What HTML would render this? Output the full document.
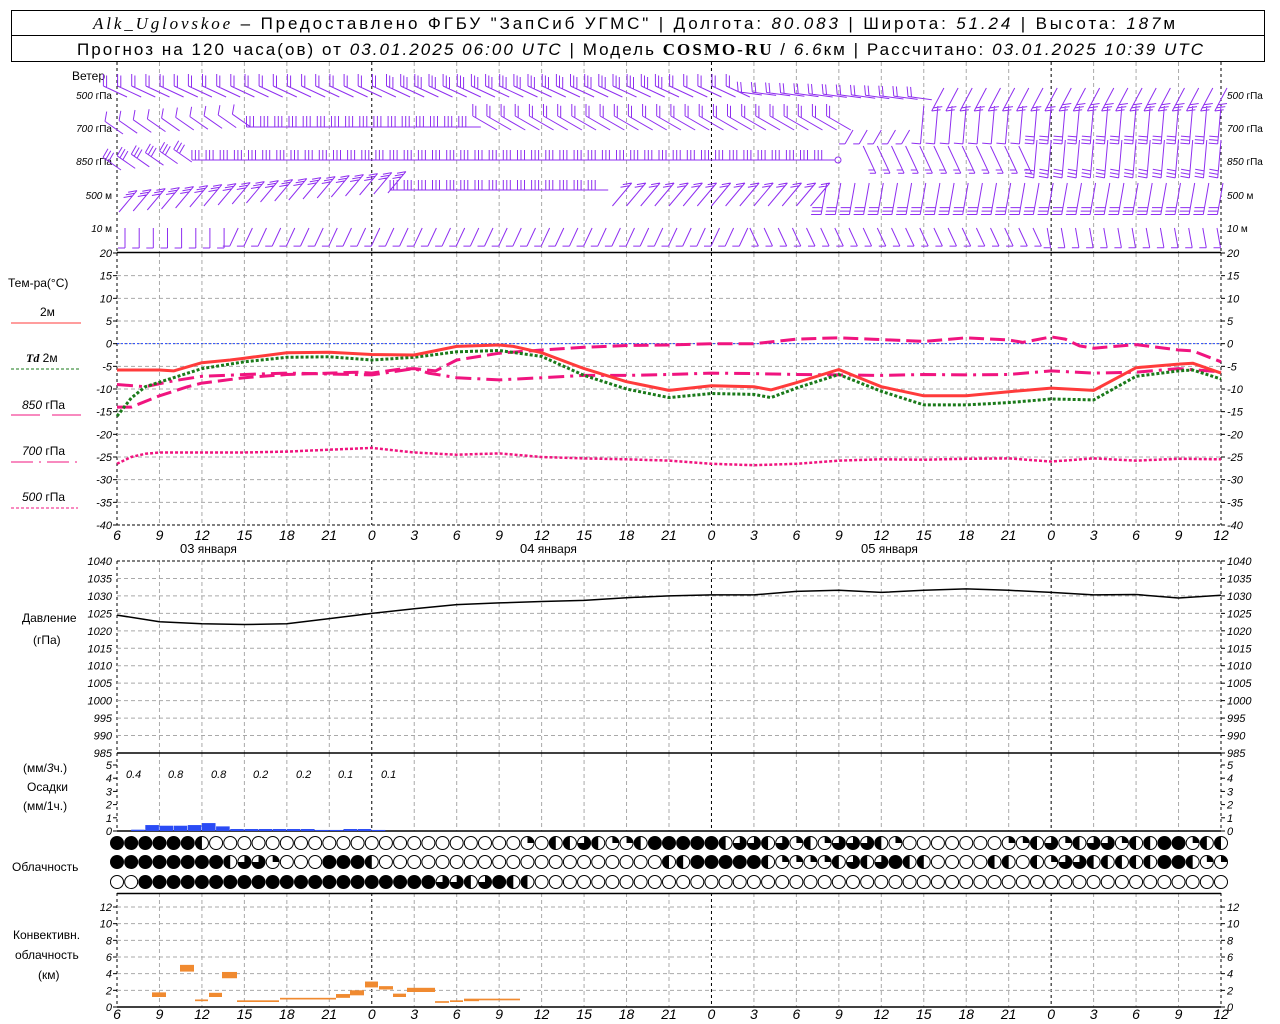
<!DOCTYPE html>
<html><head><meta charset="utf-8"><style>
html,body{margin:0;padding:0;background:#fff;width:1280px;height:1024px;overflow:hidden}
svg{display:block}
text{font-family:"Liberation Sans",sans-serif}
.n{font-style:italic;font-size:11px}
.h{font-style:italic;font-size:14px}
.l{font-size:12px}
</style></head><body>
<svg id="s" width="1280" height="1024" xmlns="http://www.w3.org/2000/svg">
<rect x="11.5" y="10.5" width="1253" height="51" fill="none" stroke="#000"/>
<line x1="11" y1="35.5" x2="1265" y2="35.5" stroke="#000"/>
<text x="93" y="29" font-size="17" textLength="1082" lengthAdjust="spacing"><tspan font-family="Liberation Serif" font-style="italic">Alk_Uglovskoe</tspan> – Предоставлено ФГБУ "ЗапСиб УГМС" | Долгота: <tspan font-style="italic">80.083</tspan> | Широта: <tspan font-style="italic">51.24</tspan> | Высота: <tspan font-style="italic">187</tspan>м</text>
<text x="77" y="55" font-size="17" textLength="1126" lengthAdjust="spacing">Прогноз на 120 часа(ов) от <tspan font-style="italic">03.01.2025 06:00 UTC</tspan> | Модель <tspan font-family="Liberation Serif" font-weight="bold">COSMO-RU</tspan> / <tspan font-style="italic">6.6</tspan>км | Рассчитано: <tspan font-style="italic">03.01.2025 10:39 UTC</tspan></text>
<text x="72" y="80" class="l">Ветер</text>
<text x="8" y="287" class="l" font-size="13">Тем-ра(°C)</text>
<text x="40" y="316" class="l" font-size="11">2м</text>
<line x1="11" y1="323" x2="81" y2="323" stroke="#ff3b3b"/>
<text x="26" y="362" class="l" font-size="11"><tspan font-style="italic" font-weight="bold" font-family="Liberation Serif">Td</tspan>  2м</text>
<line x1="11" y1="369" x2="79" y2="369" stroke="#1a7a1a" stroke-dasharray="3,2"/>
<text x="22" y="409" class="l" font-size="11"><tspan font-style="italic">850</tspan> гПа</text>
<line x1="11" y1="415" x2="40" y2="415" stroke="#f0147f"/><line x1="52" y1="415" x2="81" y2="415" stroke="#f0147f"/>
<text x="22" y="455" class="l" font-size="11"><tspan font-style="italic">700</tspan> гПа</text>
<line x1="11" y1="462" x2="78" y2="462" stroke="#f0147f" stroke-dasharray="22,6,2,6"/>
<text x="22" y="501" class="l" font-size="11"><tspan font-style="italic">500</tspan> гПа</text>
<line x1="11" y1="508" x2="78" y2="508" stroke="#f0147f" stroke-dasharray="3,2"/>
<text x="22" y="622" class="l">Давление</text>
<text x="33" y="644" class="l">(гПа)</text>
<text x="23" y="772" class="l">(мм/<tspan font-style="italic">3</tspan>ч.)</text>
<text x="27" y="791" class="l">Осадки</text>
<text x="23" y="810" class="l">(мм/1ч.)</text>
<text x="12" y="871" class="l">Облачность</text>
<text x="13" y="939" class="l">Конвективн.</text>
<text x="15" y="959" class="l">облачность</text>
<text x="38" y="979" class="l">(км)</text>
<text x="180" y="553" class="l"><tspan font-size="13">03</tspan>  января</text>
<text x="520" y="553" class="l"><tspan font-size="13">04</tspan>  января</text>
<text x="861" y="553" class="l"><tspan font-size="13">05</tspan>  января</text>
<g class="n" font-style="italic" font-size="13">
<text x="126" y="778">0.4</text><text x="168" y="778">0.8</text><text x="211" y="778">0.8</text><text x="253" y="778">0.2</text><text x="296" y="778">0.2</text><text x="338" y="778">0.1</text><text x="381" y="778">0.1</text>
</g>
<g id="g"></g>
</svg>
<script>
var X=function(h){return 117+h*14.1538};
var TY=function(t){return 253+(20-t)*4.5333};
var PY=function(p){return 561+(1040-p)*3.4909};
var RY=function(r){return 831-r*13.2};
var CY=function(k){return 1007-k*8.333};
var o='';
function ln(x1,y1,x2,y2,c,w,d){o+='<line x1="'+x1+'" y1="'+y1+'" x2="'+x2+'" y2="'+y2+'" stroke="'+c+'" stroke-width="'+(w||1)+'"'+(d?' stroke-dasharray="'+d+'"':'')+'/>';}
function tx(x,y,s,a,cl){o+='<text x="'+x+'" y="'+y+'" class="'+(cl||'n')+'"'+(a?' text-anchor="'+a+'"':'')+'>'+s+'</text>';}
var G='#a9a9a9',GD='4,3';
// vertical grids
var panels=[[62,252],[253,525],[561,753],[753,831],[893,1007]];
for(var h=3;h<78;h+=3){var day=(h==18||h==42||h==66);
 panels.forEach(function(p){ln(X(h),p[0],X(h),p[1],day?'#000':G,1,day?'3,3':GD);});}
panels.forEach(function(p){ln(117,p[0],117,p[1],'#000',1,'3,3');ln(1221,p[0],1221,p[1],'#000',1,'3,3');});
// temp grid
for(var t=20;t>=-40;t-=5){var y=TY(t);if(t<20&&t>-40)ln(117,y,1221,y,G,1,GD);
 ln(113,y,117,y,'#000');ln(1221,y,1225,y,'#000');tx(112,y+4,t,'end');tx(1227,y+4,t);}
ln(117,252.5,1221,252.5,'#000',1.5);ln(117,525,1221,525,'#000',1,'3,2');
ln(117,TY(0),1221,TY(0),'#2244ff',1,'2,2');
// pressure grid
for(var p=1040;p>=985;p-=5){var y=PY(p);if(p<1040&&p>985)ln(117,y,1221,y,G,1,GD);
 ln(1221,y,1225,y,'#000');tx(112,y+4,p,'end');tx(1227,y+4,p);}
ln(117,561,1221,561,'#000',1,'3,2');ln(117,753,1221,753,'#000',1.5);
for(var r=0;r<=5;r++){var y=RY(r);ln(113,y,117,y,'#000');ln(1221,y,1225,y,'#000');if(r>0){tx(112,y+4,r,'end');tx(1227,y+4,r);}}
tx(112,835,0,'end');tx(1227,835,0);
ln(117,831,1221,831,'#000',1.5);
// conv grid
for(var k=0;k<=12;k+=2){var y=CY(k);if(k>0)ln(117,y,1221,y,G,1,GD);ln(113,y,117,y,'#000');ln(1221,y,1225,y,'#000');tx(112,y+4,k,'end');tx(1227,y+4,k);}
ln(117,893.5,1221,893.5,'#000',1.5);ln(117,1007,1221,1007,'#000',1.5);
// x labels
for(var h=0;h<=78;h+=3){var v=(6+h)%24;tx(X(h),540,v,'middle','h');tx(X(h),1019,v,'middle','h');}
// wind labels
[['500','гПа',99],['700','гПа',132],['850','гПа',165],['500','м',199],['10','м',232]].forEach(function(a){
 o+='<text x="112" y="'+a[2]+'" text-anchor="end" font-size="10"><tspan font-style="italic">'+a[0]+'</tspan> '+a[1]+'</text>';
 o+='<text x="1227" y="'+a[2]+'" font-size="10"><tspan font-style="italic">'+a[0]+'</tspan> '+a[1]+'</text>';});
// lines
function pl(pts,f,c,w,d){var s=pts.map(function(q){return X(q[0]).toFixed(1)+','+f(q[1]).toFixed(1)}).join(' ');
 o+='<polyline points="'+s+'" fill="none" stroke="'+c+'" stroke-width="'+w+'"'+(d?' stroke-dasharray="'+d+'"':'')+' stroke-linejoin="round"/>';}
var red=[[0,-5.8],[3,-5.8],[4,-6],[6,-4.2],[8,-3.6],[9,-3.2],[12,-2],[15,-1.9],[18,-2.4],[21,-2.5],[24,-0.6],[27,-0.3],[28,-0.6],[30,-2],[33,-5.5],[36,-8.4],[39,-10.3],[42,-9.3],[45,-9.5],[46.2,-10.2],[48,-8.6],[51,-5.7],[54,-9.5],[57,-11.5],[60,-11.5],[63,-10.6],[66,-9.8],[69,-10.3],[72,-5.3],[75,-4.5],[76,-4.3],[78,-6.5]];
var grn=[[0,-16],[1,-12],[2,-9.5],[3,-8.5],[6,-5.5],[9,-4],[12,-3],[15,-2.9],[18,-3.6],[21,-3],[24,-1.8],[27,-1.5],[30,-2.8],[33,-7],[36,-10],[39,-11.9],[42,-11],[45,-11.2],[46.2,-11.9],[48,-9.8],[51,-6.8],[54,-10.5],[57,-13.5],[60,-13.5],[63,-13],[66,-12.2],[69,-12.4],[72,-7.2],[75,-6],[76,-5.8],[78,-7.8]];
var p850=[[0,-14],[1,-14],[3,-11.5],[5,-9.5],[6,-8.7],[9,-7.5],[12,-6.8],[15,-6.5],[17,-6.3],[18,-6.5],[20,-5.6],[21,-5.5],[22.5,-6],[24,-3.6],[26,-2.6],[27,-2.1],[30,-1.4],[33,-0.8],[36,-0.4],[39,-0.3],[42,0],[45,0],[48,1],[51,1.3],[54,0.9],[57,0.5],[60,1.3],[63,0.8],[64,0.3],[66,1.5],[67,1],[68,-0.5],[69,-1],[72,-0.2],[75,-1.4],[76,-1.6],[78,-4]];
var p700=[[0,-9],[2,-9.5],[4,-8.2],[6,-7.2],[9,-6.8],[12,-6.5],[15,-6.7],[18,-6.9],[21,-5.5],[22,-6.5],[24,-7.5],[27,-8],[30,-7.5],[33,-7],[36,-7],[39,-6.8],[42,-6.5],[45,-6.6],[48,-6.8],[51,-6.9],[54,-7],[57,-6.8],[60,-6.9],[63,-6.8],[66,-6],[69,-6.5],[72,-6.3],[75,-5.5],[78,-6.2]];
var p500=[[0,-26.5],[1,-25],[2,-24.3],[3,-24],[6,-24],[9,-24],[12,-23.8],[15,-23.4],[18,-23],[21,-24],[24,-24.5],[27,-24.2],[30,-25],[33,-25.3],[36,-25.5],[39,-25.8],[42,-26.5],[45,-26.8],[48,-26.5],[51,-25.8],[54,-25.5],[57,-25.6],[60,-25.4],[63,-25.3],[66,-26],[69,-25.3],[72,-25.8],[75,-25.4],[78,-25.5]];
pl(p500,TY,'#f0147f',2.5,'3,2');
pl(p700,TY,'#f0147f',3,'16,6,3,6');
pl(p850,TY,'#f0147f',3,'15,6');
pl(grn,TY,'#1a7a1a',3,'3,2');
pl(red,TY,'#ff3b3b',3);
var prs=[[0,1024.5],[3,1022.6],[6,1022],[9,1021.8],[12,1022],[15,1023.5],[18,1025],[21,1026.3],[24,1027.5],[27,1028],[30,1028.4],[33,1028.7],[36,1029.5],[39,1030],[42,1030.3],[45,1030.3],[48,1031.3],[51,1031.6],[54,1031],[57,1031.6],[60,1032],[63,1031.6],[66,1031],[69,1030.3],[72,1030.4],[75,1029.4],[78,1030.2]];
pl(prs,PY,'#000',1.5);
// precip bars
var pb=[0.1,0.45,0.4,0.4,0.45,0.6,0.35,0.15,0.15,0.15,0.15,0.15,0.15,0.08,0.08,0.15,0.15,0.08];
pb.forEach(function(v,i){var x1=X(i+1),y=RY(v);o+='<rect x="'+x1+'" y="'+y+'" width="13.6" height="'+(831-y)+'" fill="#2a4bf5"/>';});
// conv bars
[[152,166,1.2,1.1],[180,194,4.25,1.6],[195,208,0.7,0.4],[209,222,1.2,1.0],[222,237,3.45,1.5],[237,279,0.6,0.4],[280,336,0.9,0.4],[336,350,1.1,0.9],[350,364,1.4,1.2],[365,378,2.35,1.4],[379,393,2.1,0.8],[393,406,1.2,0.8],[407,435,1.8,1.0],[435,449,0.5,0.4],[450,463,0.6,0.4],[464,479,0.7,0.6],[479,520,0.8,0.4]].forEach(function(b){
 var y=CY(b[2]);o+='<rect x="'+b[0]+'" y="'+(y-b[3]*4.2)+'" width="'+(b[1]-b[0])+'" height="'+(b[3]*4.2)+'" fill="#f08a30"/>';});
// clouds
function rep(c,n){return c.repeat(n);}
var rows=[
 '444444'+'2'+rep('0',22)+'102232112'+'44444'+'2332312133321'+rep('0',7)+'1123123312244122',
 '44444444'+'2331'+'000'+'444'+'2'+rep('0',20)+'22'+'44444'+'21111232'+'342200002202133222224421'+'1',
 '00'+rep('4',21)+'3323422'+rep('0',49)];
var cy=[843,862,882];
rows.forEach(function(s,ri){for(var k=0;k<79;k++){var c=+s.charAt(k)||0,x=X(k),y=cy[ri],R=6.5;
 if(c==4){o+='<circle cx="'+x+'" cy="'+y+'" r="'+(R+0.5)+'" fill="#000"/>';continue;}
 o+='<circle cx="'+x+'" cy="'+y+'" r="'+R+'" fill="#fff" stroke="#000" stroke-width="1"/>';
 if(c==1)o+='<path d="M'+x+','+y+' L'+x+','+(y-R)+' A'+R+','+R+' 0 0 1 '+(x+R)+','+y+' Z" fill="#000"/>';
 if(c==2)o+='<path d="M'+x+','+(y-R)+' A'+R+','+R+' 0 0 0 '+x+','+(y+R)+' Z" fill="#000"/>';
 if(c==3)o+='<path d="M'+x+','+y+' L'+x+','+(y-R)+' A'+R+','+R+' 0 1 1 '+(x-R)+','+y+' Z" fill="#000"/>';
}});
// wind barbs
var W='#8f2ff0';var wb='';
function barb(x,y,a,L,n,fa,fl){var r=Math.PI/180,c=Math.cos(a*r),s=Math.sin(a*r),ex=x+L*c,ey=y+L*s;
 wb+='M'+x.toFixed(1)+' '+y.toFixed(1)+'L'+ex.toFixed(1)+' '+ey.toFixed(1);
 var fc=Math.cos(fa*r),fs=Math.sin(fa*r);
 for(var i=0;i<n;i++){var px=ex-c*i*3.5,py=ey-s*i*3.5;wb+='M'+px.toFixed(1)+' '+py.toFixed(1)+'l'+(fl*fc).toFixed(1)+' '+(fl*fs).toFixed(1);}}
for(var h=0;h<=78;h++){var x=X(h);
 // 500 hPa
 if(h<45)barb(x+10,97,-155,26,h>=20&&h<40?3:2,-90,12);
 else if(h<58)barb(x+8,95+(h-45)*0.4,-172,24,2,-95,10);
 else barb(x+6,88,118,26,h>66?3:2,-8,9);
 // 700
 if(h<10)barb(x+6,134-h*0.8,-145,22,1,-80,10);
 else if(h<26)barb(x+10,127,180,22,3,-90,11);
 else if(h<52)barb(x+12,130,-150,28,2,-90,12);
 else if(h<57)barb(x,130,120,16,1,180,6);
 else barb(x,106,95,38,h>64?3:1,185,9);
 // 850
 if(h<6)barb(x+4,170-h*1.6,-145,22,3,-60,10);
 else if(h<51)barb(x+10,160,180,20,3,-90,10);
 else if(h<53){}
 else if(h<65)barb(x-4,146,65,30,2,180,6);
 else barb(x,140,95,38,3,190,9);
 // 500 m
 if(h<20)barb(x+2,212-h*1.0,-50,28,3,170,9);
 else if(h<35)barb(x+10,190,180,20,3,-90,10);
 else if(h<50)barb(x,206,-50,30,2,170,9);
 else barb(x+2,183,100,32,3,180,10);
 // 10 m
 var a=h<8?90:(h<45?115:(h<66?65:80));
 barb(x+(h<45?8:-4),228,a,20,1,180,7);
}
o+='<path d="'+wb+'" fill="none" stroke="'+W+'" stroke-width="1"/>';
o+='<circle cx="838" cy="160" r="3" fill="none" stroke="'+W+'"/>';
document.getElementById('g').innerHTML=o;
</script>
</body></html>
